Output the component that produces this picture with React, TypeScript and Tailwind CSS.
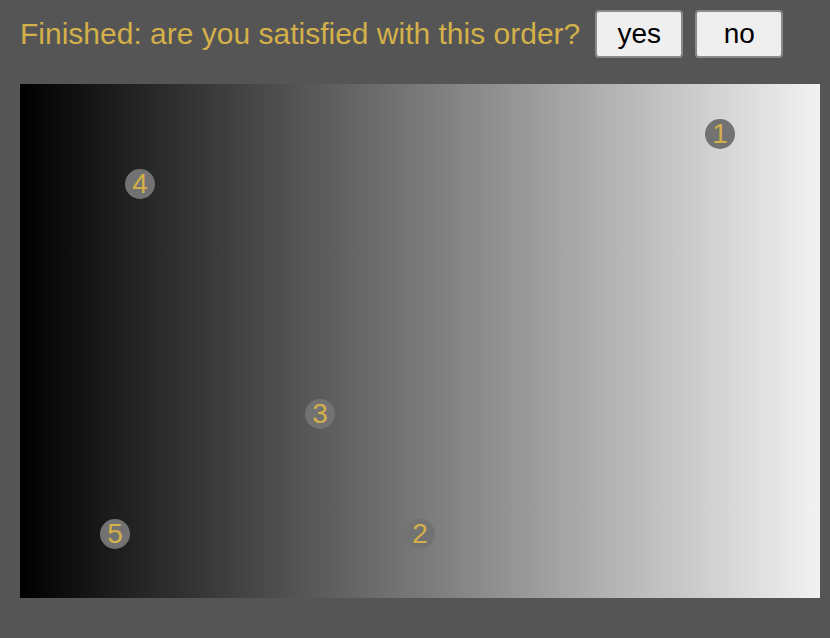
const nodes = [
  { n: 1, x: 700, y: 50 },
  { n: 2, x: 400, y: 450 },
  { n: 3, x: 300, y: 330 },
  { n: 4, x: 120, y: 100 },
  { n: 5, x: 95, y: 450 },
];

export default function App() {
  return (
    <div className="w-[830px] h-[638px] bg-[#555555] font-['Liberation_Sans',Arial,sans-serif]">
      <div className="flex items-center h-[66px] pl-5 pt-[1px]">
        <span className="text-[30px] text-[#d4b04a] mr-[15px]">
          Finished: are you satisfied with this order?
        </span>
        <button className="w-[88px] h-[48px] bg-[#efefef] border-2 border-[#8a8a8a] rounded text-[28px] text-black mr-3">
          yes
        </button>
        <button className="w-[88px] h-[48px] bg-[#efefef] border-2 border-[#8a8a8a] rounded text-[28px] text-black">
          no
        </button>
      </div>
      <div className="relative ml-5 mt-[18px] w-[800px] h-[514px] bg-[linear-gradient(to_right,#000000,#f2f2f2)]">
        {nodes.map((d) => (
          <div
            key={d.n}
            className="absolute w-[30px] h-[30px] -ml-[15px] -mt-[15px] rounded-full bg-[#727272] flex items-center justify-center text-[28px] leading-none text-[#d4b04a]"
            style={{ left: d.x, top: d.y }}
          >
            {d.n}
          </div>
        ))}
      </div>
    </div>
  );
}
